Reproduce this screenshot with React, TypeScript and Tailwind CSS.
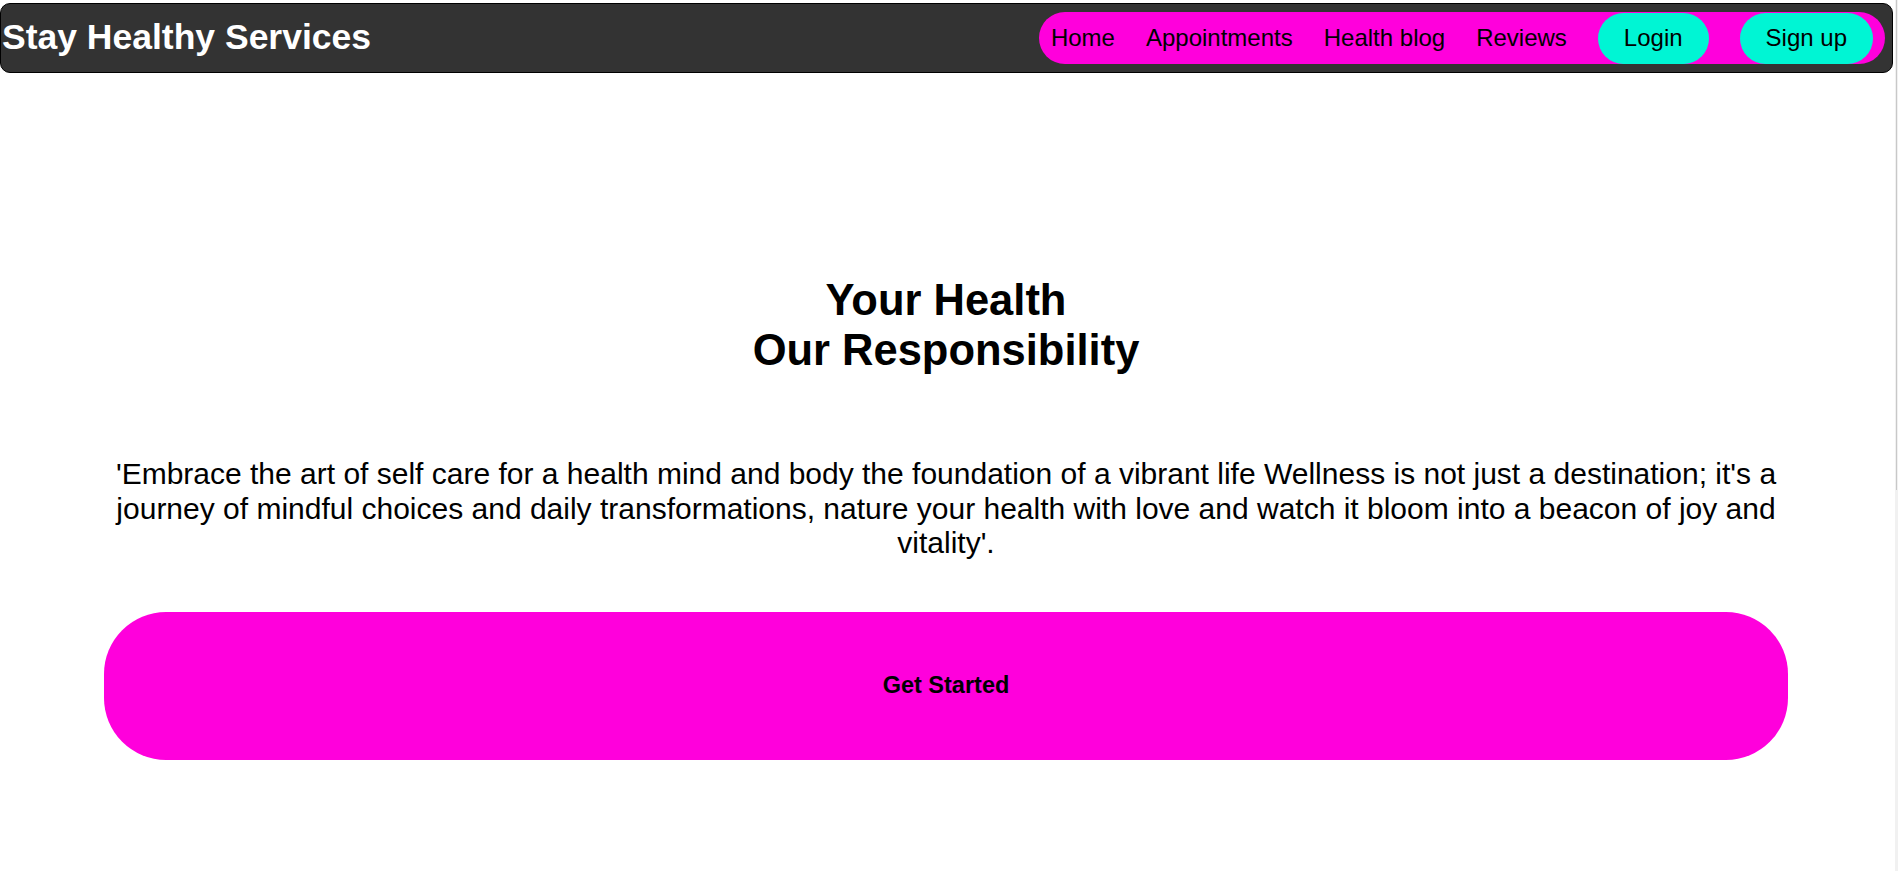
import React from "react";

const navLinks = ["Home", "Appointments", "Health blog", "Reviews"];

const Navbar = () => (
  <nav className="mt-[3px] mr-[2px] flex h-[70px] items-center justify-between rounded-[10px] border border-black bg-[#333333]">
    <h1 className="pl-[1px] text-[35.5px] font-bold leading-none text-white">Stay Healthy Services</h1>
    <ul className="mr-[7px] flex h-[52px] items-center gap-[31px] rounded-full bg-[#ff00dc] px-[12px] text-[24px] text-black">
      {navLinks.map((link) => (
        <li key={link}>
          <a href="#">{link}</a>
        </li>
      ))}
      <li>
        <button className="h-[51px] rounded-full bg-[#00f5d4] px-[26px] text-[24px] text-black">Login</button>
      </li>
      <li>
        <button className="h-[51px] rounded-full bg-[#00f5d4] px-[26px] text-[24px] text-black">Sign up</button>
      </li>
    </ul>
  </nav>
);

const Hero = () => (
  <section className="flex flex-col items-center pl-[104px] pr-[107px] text-black">
    <h2 className="mt-[202px] text-center text-[43.5px] font-bold leading-[50px]">
      Your Health
      <br />
      Our Responsibility
    </h2>
    <p className="mt-[82px] text-center text-[30px] leading-[34.5px]">
      'Embrace the art of self care for a health mind and body the foundation of a vibrant life Wellness is not just
      a destination; it's a journey of mindful choices and daily transformations, nature your health with love and
      watch it bloom into a beacon of joy and vitality'.
    </p>
    <button className="mt-[51px] h-[148px] w-full rounded-[62px] bg-[#ff00dc] text-[23.5px] font-bold text-black">
      Get Started
    </button>
  </section>
);

export default function App() {
  return (
    <div className="flex min-h-[871px] w-full bg-white font-['Liberation_Sans',Arial,sans-serif]">
      <div className="min-w-0 flex-1">
        <Navbar />
        <Hero />
      </div>
      {/* edge of the browser scrollbar */}
      <div className="w-[3px] bg-[#f1f1f1]">
        <div className="ml-[1px] h-[490px] w-[1px] bg-[#c8c8c8]" />
      </div>
    </div>
  );
}
